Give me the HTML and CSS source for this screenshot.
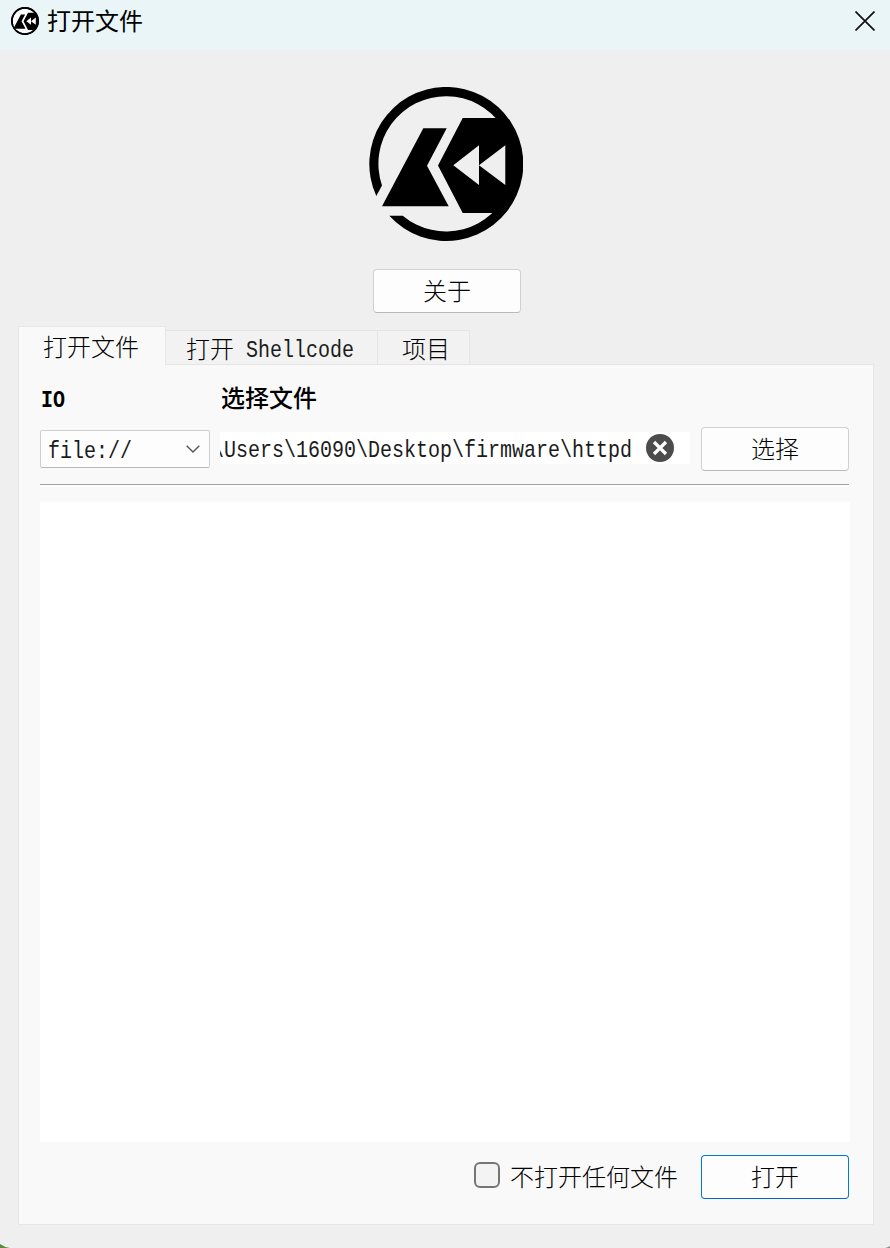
FILE: index.html
```html
<!DOCTYPE html>
<html lang="zh-CN">
<head>
<meta charset="utf-8">
<title>打开文件</title>
<link rel="stylesheet" href="styles.css">
</head>
<body>
<svg class="defs" width="0" height="0" aria-hidden="true">
  <symbol id="logo" viewBox="0 0 154 154">
    <path d="M7.3 109A77 77 0 1 1 20.3 128.7H33.7A67.6 67.6 0 1 0 13 98.5Z"/>
    <path d="M54.3 41.3H77.7L58 78.7L79.7 119.3H13Z"/>
    <path fill-rule="evenodd" d="M93.7 31H127L140 42A73 73 0 0 1 137 117L124 126H93.7L69 78.5ZM84.3 78.3L110 98V78.3L136.3 98V58.3L110 78.3V58.3Z"/>
  </symbol>
</svg>
<div class="window">
  <header class="titlebar">
    <svg class="app-icon" viewBox="0 0 154 154"><circle cx="77" cy="77" r="72" fill="#fff" stroke="#000" stroke-width="9"/><use href="#logo"/></svg>
    <h1 class="title">打开文件</h1>
    <svg class="close" viewBox="0 0 20 20"><path d="M.5 .5L19.5 19.5M19.5 .5L.5 19.5"/></svg>
  </header>
  <main class="content">
    <svg class="logo"><use href="#logo"/></svg>
    <button class="button about">关于</button>
    <nav class="tabs">
      <div class="tab active">打开文件</div>
      <div class="tab shell"><span>打开</span><span class="mono">Shellcode</span></div>
      <div class="tab project">项目</div>
    </nav>
    <section class="panel">
      <div class="labels"><b class="io"><span class="mono">IO</span></b><b>选择文件</b></div>
      <div class="fields">
        <div class="select"><span class="mono">file://</span><svg class="chevron" viewBox="0 0 14 8"><path d="M.7 .8L7 7L13.3 .8"/></svg></div>
        <div class="input">
          <div class="clip"><span class="mono">\Users\16090\Desktop\firmware\httpd</span></div>
          <svg class="clear" viewBox="0 0 28 28"><circle cx="14" cy="14" r="14"/><path d="M8 8L20 20M20 8L8 20"/></svg>
        </div>
        <button class="button">选择</button>
      </div>
      <div class="rule"></div>
      <div class="list"></div>
      <footer class="footer">
        <label class="check"><span class="box"></span><span class="check-text">不打开任何文件</span></label>
        <button class="button primary">打开</button>
      </footer>
    </section>
  </main>
  <svg class="corner left" viewBox="0 0 10 4"><path d="M0 0Q4 3 10 4H0Z"/></svg>
  <svg class="corner right" viewBox="0 0 5 2"><path d="M5 0Q3 1.5 0 2H5Z"/></svg>
</div>
</body>
</html>
```
FILE: styles.css
```css
* { box-sizing: border-box; }
body {
  margin: 0;
  background: #efefef;
  color: #000;
  font: 300 24px/30px "Noto Sans CJK SC", sans-serif;
}
.defs { position: absolute; }
.window { position: relative; width: 890px; height: 1248px; overflow: hidden; }
.titlebar {
  display: flex;
  align-items: center;
  height: 50px;
  padding: 0 15px 8px 11px;
  background: #e9f5f7;
}
.app-icon { width: 28px; height: 28px; }
.title { margin: -2px auto 0 8px; font-size: 24px; font-weight: 400; line-height: 30px; }
.close { width: 20px; height: 20px; fill: none; stroke: #111; stroke-width: 1.7; }
.content { display: flex; flex-direction: column; padding: 37px 16px 0 18px; }
.logo { width: 154px; height: 154px; margin-left: 351px; }
.button {
  display: flex;
  flex: none;
  align-items: center;
  justify-content: center;
  width: 148px;
  height: 44px;
  padding: 0 0 2px;
  border: 1px solid #d0d0d0;
  border-bottom-color: #b9b9b9;
  border-radius: 4px;
  background: #fdfdfd;
  color: #000;
  font: inherit;
}
.about { margin: 28px 0 13px 355px; }
.primary { border-color: #0078d4; border-bottom-color: #006cbe; }
.mono {
  display: inline-block;
  color: #1c1c1c;
  font: 400 24px/30px "Liberation Mono", monospace;
  transform: scaleX(.8333);
  transform-origin: left center;
  white-space: pre;
}
.tabs { display: flex; align-items: flex-end; height: 39px; margin-bottom: -1px; }
.tab {
  height: 35px;
  padding-top: 2px;
  border: 1px solid #e5e5e5;
  border-left: 0;
  background: #f2f2f2;
}
.active {
  z-index: 1;
  width: 148px;
  height: 39px;
  padding: 4px 0 0 24px;
  border-left: 1px solid #e5e5e5;
  border-bottom: 0;
  background: #f9f9f9;
}
.shell { display: flex; gap: 12px; width: 212px; padding-left: 20px; }
.shell .mono { width: 108px; margin-top: 3px; }
.project { width: 92px; padding-left: 24px; }
.panel {
  height: 861px;
  padding: 17px 24px 0 21px;
  border: 1px solid #e5e5e5;
  background: #f9f9f9;
}
.labels { display: flex; height: 30px; padding-left: 1px; font-weight: 500; }
.labels b { font-weight: 500; }
.io { width: 180px; }
.io .mono { color: #000; font-weight: 700; }
.fields { display: flex; align-items: center; margin-top: 15px; height: 44px; }
.select {
  display: flex;
  flex: none;
  align-items: center;
  justify-content: space-between;
  width: 170px;
  height: 38px;
  padding: 0 9px 0 7px;
  border: 1px solid #d0d0d0;
  border-bottom-color: #b9b9b9;
  border-radius: 2px;
  background: #fdfdfd;
}
.select .mono { margin-top: 5px; }
.chevron { width: 14px; height: 8px; fill: none; stroke: #555; stroke-width: 1.4; }
.input {
  display: flex;
  align-items: center;
  width: 470px;
  height: 32px;
  margin: -2px 11px 0 10px;
  background: #fff;
}
.clip { display: flex; justify-content: flex-end; width: 412px; margin-top: 5px; overflow: hidden; }
.clip .mono { flex: none; transform-origin: right center; }
.clear { width: 28px; height: 28px; margin-left: 14px; fill: #4c4c4c; }
.clear path { stroke: #fff; stroke-width: 3.2; }
.rule { height: 3px; margin-top: 13px; border-top: 1px solid #a0a0a0; background: #fff; }
.list { width: 810px; height: 640px; margin-top: 15px; background: #fff; }
.footer { display: flex; align-items: center; justify-content: flex-end; gap: 23px; margin-top: 13px; }
.check { display: flex; align-items: center; gap: 10px; }
.check-text { margin-top: -2px; }
.box {
  width: 26px;
  height: 26px;
  margin-top: -4px;
  border: 2px solid #757575;
  border-radius: 6px;
  background: #f3f3f3;
}
.corner { position: absolute; bottom: 0; }
.left { left: 0; width: 10px; height: 4px; fill: #5d8742; }
.right { right: 0; width: 5px; height: 2px; fill: #888; }
```
